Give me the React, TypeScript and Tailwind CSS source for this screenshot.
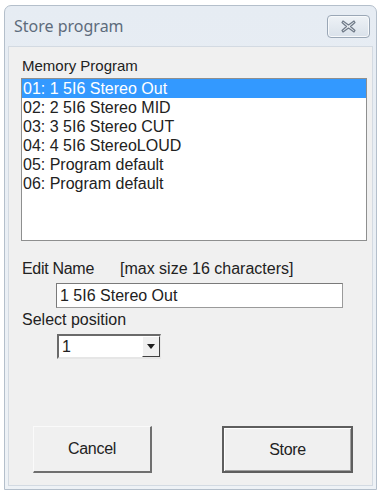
import { useState } from "react";

const programs = [
  "01: 1 5I6 Stereo Out",
  "02: 2 5I6 Stereo MID",
  "03: 3 5I6 Stereo CUT",
  "04: 4 5I6 StereoLOUD",
  "05: Program default",
  "06: Program default",
];

const sans = { fontFamily: '"Liberation Sans", Arial, sans-serif' };

function CloseButton() {
  return (
    <div className="flex h-[23px] w-[43px] items-center justify-center rounded-[4px] border border-[#9aa7b6] bg-gradient-to-b from-[#eef2f6] to-[#d9e1ea] shadow-[inset_0_0_0_1px_#f7f9fb]">
      <svg width="15" height="13" viewBox="0 0 15 13">
        <path
          d="M2 1 L7.5 5 L13 1 L14 2.5 L9.5 6.5 L14 10.5 L13 12 L7.5 8 L2 12 L1 10.5 L5.5 6.5 L1 2.5 Z"
          fill="#e9edf1"
          stroke="#6f7a88"
          strokeWidth="1.2"
          strokeLinejoin="round"
        />
      </svg>
    </div>
  );
}

export default function App() {
  const [selected, setSelected] = useState(0);
  const [name, setName] = useState("1 5I6 Stereo Out");

  return (
    <div className="h-[495px] w-[379px] bg-white pl-[4px] pt-[5px]" style={sans}>
      <div className="flex h-[485px] w-[373px] flex-col rounded-t-[7px] border border-[#b4bfcb] bg-gradient-to-b from-[#e6ecf3] to-[#eef2f6]">
        {/* title bar */}
        <div className="flex h-[40px] items-center justify-between pl-[9px] pr-[6px]">
          <span
            className="text-[16px] text-[#5d6b7b]"
            style={{ fontFamily: '"Noto Sans", "Open Sans", sans-serif' }}
          >
            Store program
          </span>
          <CloseButton />
        </div>

        {/* client area */}
        <div className="mx-[3px] mb-[3px] flex flex-1 flex-col border border-[#d3dae2] bg-[#f0f0f0] pl-[12px] pr-[3px] text-[15px] text-[#222]">
          <div className="mt-[10px] h-[18px] pl-[1px] leading-[18px]">Memory Program</div>
          <div className="mt-[3px] h-[163px] w-[346px] border border-[#8e8f8f] bg-white text-[16px]">
            {programs.map((p, i) => (
              <div
                key={i}
                onClick={() => setSelected(i)}
                className={
                  i === selected
                    ? "h-[19px] bg-[#3399ff] pl-[1px] leading-[19px] text-white"
                    : "h-[19px] pl-[1px] leading-[19px]"
                }
              >
                {p}
              </div>
            ))}
          </div>

          <div className="mt-[18px] flex h-[19px] items-center pl-[1px] text-[16px] leading-[19px]">
            <span className="w-[98px] tracking-[-0.3px]">Edit Name</span>
            <span>[max size 16 characters]</span>
          </div>
          <input
            value={name}
            onChange={(e) => setName(e.target.value)}
            className="ml-[35px] mt-[5px] h-[25px] w-[287px] border border-[#9a9a9a] border-l-[#7a7a7a] border-t-[#7a7a7a] bg-white px-[3px] text-[16px] text-[#222] outline-none"
            style={sans}
          />

          <div className="mt-[2px] h-[19px] pl-[1px] text-[16px] leading-[19px]">Select position</div>
          <div className="ml-[36px] mt-[5px] flex h-[25px] w-[104px] items-stretch border-b-2 border-l-2 border-r border-t-2 border-b-[#e6e6e6] border-l-[#6a6a6a] border-r-[#e6e6e6] border-t-[#6a6a6a] bg-white">
            <span className="flex-1 pl-[3px] text-[16px] leading-[21px]">1</span>
            <div className="flex w-[18px] items-center justify-center border-b border-l border-r border-t border-b-[#404040] border-l-[#ffffff] border-r-[#404040] border-t-[#ffffff] bg-[#f0f0f0]">
              <svg width="8" height="5" viewBox="0 0 8 5">
                <path d="M0 0 H8 L4 5 Z" fill="#1e1e1e" />
              </svg>
            </div>
          </div>

          <div className="mt-[67px] flex">
            <button className="ml-[12px] h-[47px] w-[119px] border-b-2 border-l border-r-2 border-t border-b-[#6f6f6f] border-l-[#fafafa] border-r-[#6f6f6f] border-t-[#fafafa] bg-[#f0f0f0] text-[16px] tracking-[-0.3px] text-[#222]">
              Cancel
            </button>
            <button className="ml-[70px] h-[47px] w-[131px] border-2 border-[#5e5e5e] bg-[#f0f0f0] text-[16px] tracking-[-0.3px] text-[#222] shadow-[inset_1px_1px_0_#ffffff,inset_-1px_-1px_0_#a0a0a0]">
              Store
            </button>
          </div>
        </div>
      </div>
    </div>
  );
}
